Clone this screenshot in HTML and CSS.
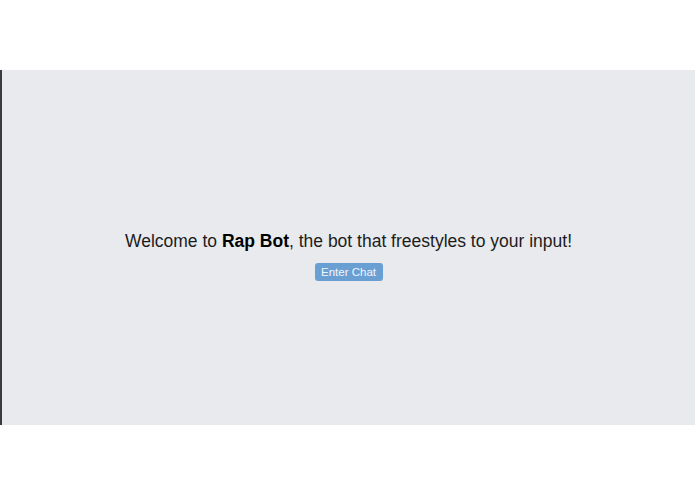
FILE: index.html
```html
<!DOCTYPE html>
<html lang="en">
<head>
    <meta charset="UTF-8">
    <meta name="viewport" content="width=device-width, initial-scale=1.0">
    <title>Rap Bot</title>
    <link rel="stylesheet" href="styles.css">
</head>
<body>
    <div class="frame">
        <div class="welcome">
            <h1 class="welcome-title">Welcome to <strong>Rap Bot</strong>, the bot that freestyles to your input!</h1>
            <button class="enter-button">Enter Chat</button>
        </div>
    </div>
</body>
</html>
```

FILE: styles.css
```css
body {
    font-family: "Liberation Sans", Arial, sans-serif;
    background-color: #ffffff;
    margin: 0;
    padding-top: 70px;
}
.frame {
    height: 355px;
    background-color: #e9eaee;
    border-left: 2px solid #3a3b3e;
    display: flex;
    align-items: center;
    justify-content: center;
}
.welcome {
    display: flex;
    flex-direction: column;
    align-items: center;
    margin-top: 16px;
}
.welcome-title {
    font-size: 17.5px;
    font-weight: normal;
    color: #1c1c1c;
    margin: 0 0 11px 0;
}
.welcome-title strong {
    font-weight: bold;
    color: #000000;
}
.enter-button {
    font-family: "Liberation Sans", Arial, sans-serif;
    font-size: 11.5px;
    color: #f2f6fb;
    background-color: #6a9fd4;
    border: none;
    border-radius: 3px;
    width: 68px;
    height: 18px;
    padding: 0;
    cursor: pointer;
}
```
